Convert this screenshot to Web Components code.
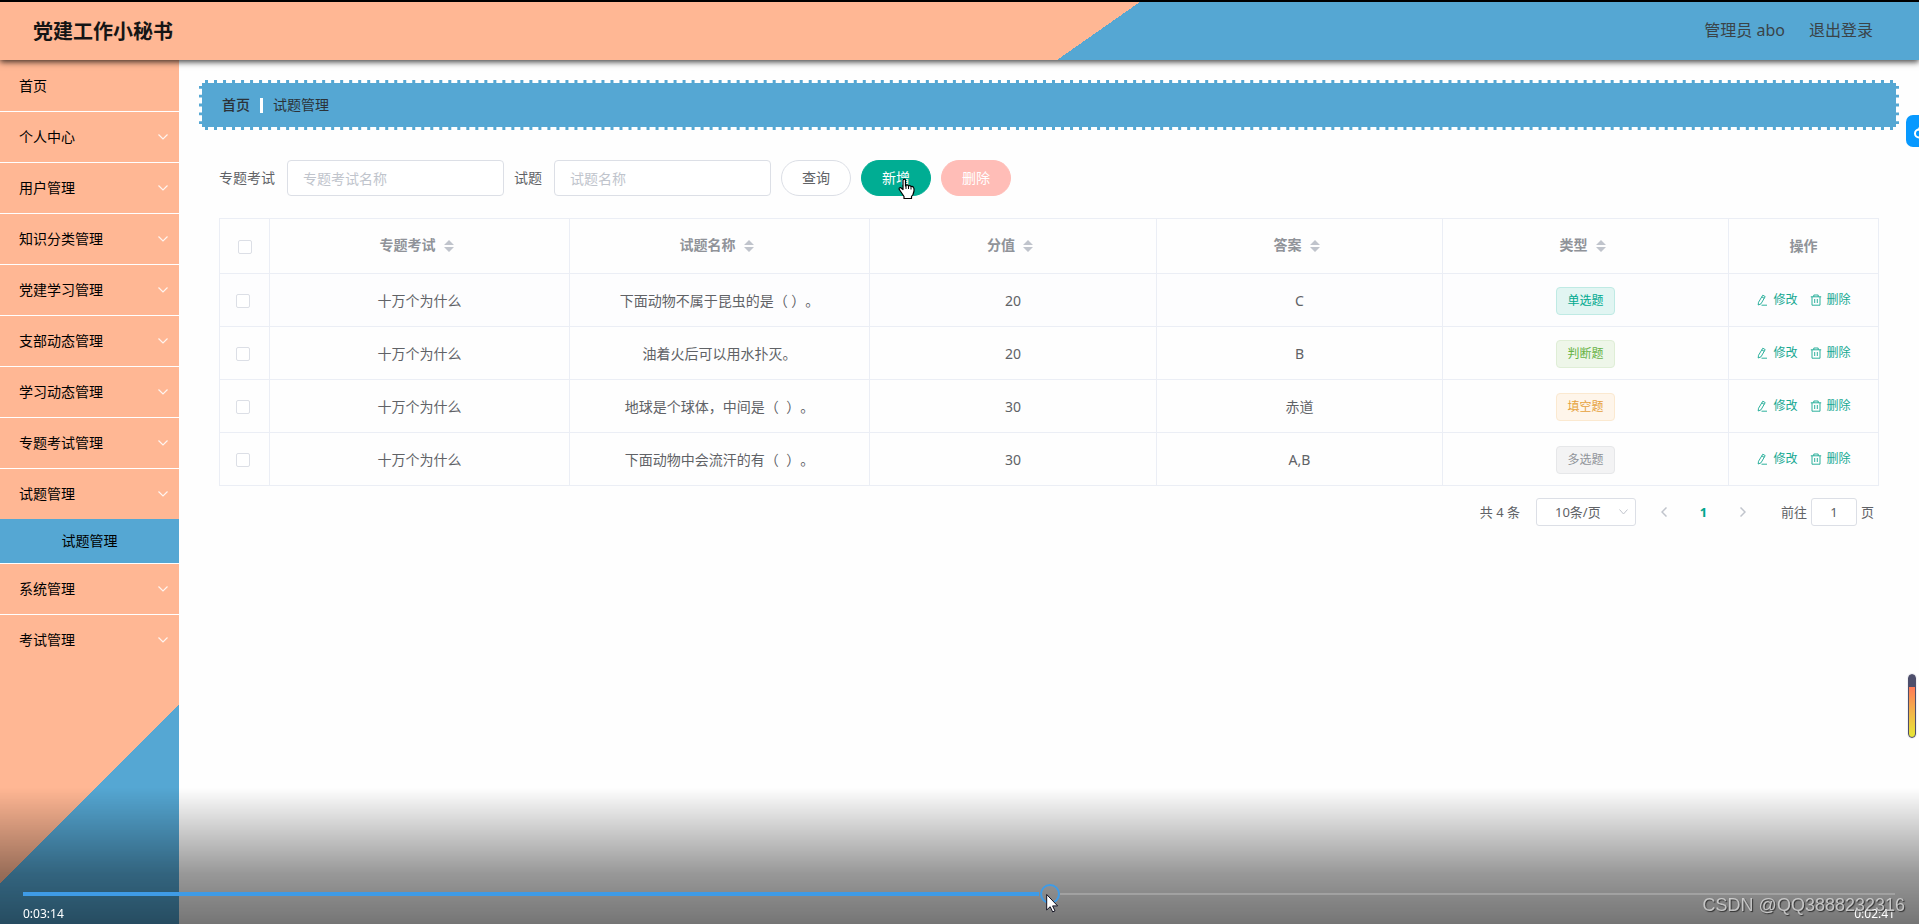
<!DOCTYPE html>
<html lang="zh-CN">
<head>
<meta charset="utf-8">
<title>党建工作小秘书</title>
<style>
  html, body { margin: 0; height: 100%; }
  body {
    font: 14px/20px "Noto Sans", "Noto Sans CJK SC", sans-serif;
    text-spacing-trim: space-all;
    color: #606266;
    --peach: #ffb794;
    --blue: #55a7d3;
    --teal: #00ad93;
    --line: #ebeef5;
    --field: #dcdfe6;
  }
</style>
</head>
<body>
<admin-app></admin-app>

<script>
const define = (name, html, setup) => {
  const tpl = document.createElement('template');
  tpl.innerHTML = `<style>*{box-sizing:border-box}a{color:inherit;text-decoration:none}input,select,button{font:inherit;color:inherit;margin:0}</style>` + html;
  customElements.define(name, class extends HTMLElement {
    constructor() {
      super();
      this.attachShadow({ mode: 'open' }).append(tpl.content.cloneNode(true));
    }
    connectedCallback() {
      if (setup && !this.ready) { this.ready = true; setup(this, this.shadowRoot); }
    }
  });
};

/* Header bar */
define('app-header', `
<style>
  :host { display: flex; align-items: center; justify-content: space-between; height: 60px; box-sizing: border-box;
    padding: 0 46px 0 33px; border-top: 2px solid #000; position: relative; z-index: 1;
    background: linear-gradient(145deg, var(--peach) 57%, var(--blue) 57%);
    background-origin: border-box; box-shadow: 0 2px 6px rgba(0,0,0,.75); }
  h1 { margin: 0; padding-top: 2px; font-size: 20px; line-height: 56px; font-weight: 700; color: #151515; }
  nav { display: flex; gap: 24px; font-size: 16px; line-height: 56px; color: #3a4348; padding-bottom: 2px; }
</style>
<h1><slot></slot></h1>
<nav><span>管理员 abo</span><a href="#logout">退出登录</a></nav>`);

/* One entry of the side menu */
define('menu-item', `
<style>
  :host { display: block; border-bottom: 1px solid #fff; }
  :host([last]), :host([open]) { border-bottom: 0; }
  a { display: flex; align-items: center; justify-content: space-between; height: 50px; padding: 0 11px 0 19px; color: #000; }
  :host([leaf]) svg { display: none; }
  :host([sub]) a { height: 44px; padding: 0; justify-content: center; background: var(--blue); }
  svg { width: 10px; height: 6px; }
</style>
<a href="#"><slot></slot><svg viewBox="0 0 10 6"><path d="M.5.5 5 5 9.500.5" fill="none" stroke="#fff" stroke-opacity=".85" stroke-width="1.200"/></svg></a>`);

define('side-menu', `
<style>
  :host { display: block; width: 179px; flex: none; padding-top: 1px; box-sizing: border-box;
    background: linear-gradient(135deg, var(--peach) 79%, var(--blue) 79%); }
</style>
<nav>
  <menu-item leaf>首页</menu-item>
  <menu-item>个人中心</menu-item>
  <menu-item>用户管理</menu-item>
  <menu-item>知识分类管理</menu-item>
  <menu-item>党建学习管理</menu-item>
  <menu-item>支部动态管理</menu-item>
  <menu-item>学习动态管理</menu-item>
  <menu-item>专题考试管理</menu-item>
  <menu-item open>试题管理</menu-item>
  <menu-item sub leaf>试题管理</menu-item>
  <menu-item>系统管理</menu-item>
  <menu-item last>考试管理</menu-item>
</nav>`);

define('bread-crumb', `
<style>
  :host { display: flex; align-items: center; gap: 9px; height: 50px; box-sizing: border-box; padding: 0 20px;
    background: var(--blue); border: 3px dashed #fff; color: #2b3238; }
  a { font-weight: 500; }
  i { width: 3px; height: 15px; background: #fff; margin: 0 1px; }
</style>
<a href="#home">首页</a><i></i><span>试题管理</span>`);

define('search-field', `
<style>
  :host { display: flex; align-items: center; }
  label { margin-right: 12px; }
  input { width: 217px; height: 36px; padding: 0 15px; border: 1px solid var(--field); border-radius: 4px; background: #fff; outline: 0; }
  input::placeholder { color: #c0c4cc; opacity: 1; }
</style>
<label for="f"></label><input id="f" type="text">`, (el, root) => {
  root.querySelector('label').textContent = el.getAttribute('label');
  root.querySelector('input').placeholder = el.getAttribute('hint');
});

define('pill-button', `
<style>
  :host { display: block; position: relative; }
  button { display: block; width: 70px; height: 36px; padding: 0; border: 1px solid var(--field); border-radius: 18px; background: #fff; cursor: pointer; }
  :host([kind=primary]) button { background: var(--teal); border-color: var(--teal); color: #fff; }
  :host([kind=danger]) button { background: #ffbdb7; border-color: #ffbdb7; color: #fff; }
</style>
<button type="button"><slot></slot></button><slot name="over"></slot>`);

define('hand-cursor', `
<style>
  :host { position: absolute; left: 37px; top: 18px; width: 17px; height: 22px; pointer-events: none; }
  svg { display: block; }
</style>
<svg width="17" height="22" viewBox="0 0 17 22"><path d="M5.500 1.500q1.500-1 2 .5V8l1-1q1.500-.5 2 1 1.500-1 2.500.5 1.500-.7 2.500.8.800 1 .5 3.700l-1 3.500-1.500 2v2H6v-2l-2-3-3-4.500q0-1.500 1.500-1.500l2.500 2V2z" fill="#fff" stroke="#000" stroke-width="1.200" stroke-linejoin="round"/><path d="M8 8v3M10.500 8v3M13 9v2.500" stroke="#000" fill="none"/></svg>`);

define('tick-box', `
<style>
  :host { display: inline-block; vertical-align: middle; line-height: 0; }
  input { appearance: none; width: 14px; height: 14px; border: 1px solid var(--field); border-radius: 2px; background: #fff; }
</style>
<input type="checkbox" aria-label="选择">`);

define('sort-arrows', `
<style>
  :host { display: inline-block; vertical-align: middle; margin-left: 8px; line-height: 0; }
</style>
<svg width="10" height="12" viewBox="0 0 10 12"><path d="M5 0 10 5H0zM5 12 10 7H0z" fill="#c0c4cc"/></svg>`);

define('type-tag', `
<style>
  :host { display: inline-block; vertical-align: middle; height: 28px; box-sizing: border-box; padding: 0 10px; border: 1px solid #bfeae4; border-radius: 4px;
    font-size: 12px; line-height: 26px; background: #e1f5f2; color: #00a98f; }
  :host([kind=judge]) { background: #eef6e9; border-color: #dfeed6; color: #67b345; }
  :host([kind=blank]) { background: #fef5ea; border-color: #fbe9d0; color: #e6a23c; }
  :host([kind=multi]) { background: #f3f3f4; border-color: #e6e7e9; color: #909399; }
</style><slot></slot>`);

define('row-actions', `
<style>
  :host { display: flex; justify-content: center; gap: 12px; font-size: 12px; line-height: 18px; color: #16a892; padding-bottom: 2px; }
  button { display: flex; align-items: center; gap: 5px; border: 0; background: none; padding: 0; cursor: pointer; }
  svg { fill: none; stroke: currentColor; width: 12px; height: 12px; }
</style>
<button type="button"><svg viewBox="0 0 12 12"><path d="M6.800 1.200 9.200 2.600 5 9.800 2.200 11 2.500 8.300zM5.800 2.900 8.200 4.300M5.500 11.200H11" stroke-width=".9"/></svg>修改</button>
<button type="button"><svg viewBox="0 0 12 12"><path d="M.8 2.800H11.200M3.800 2.800V1H8.200V2.800M2 2.800V11.200H10V2.800M4.700 5V9M7.300 5V9" stroke-width=".9"/></svg>删除</button>`);

define('question-table', `
<style>
  :host { display: block; }
  table { width: 100%; table-layout: fixed; border-collapse: separate; border-spacing: 0; border-top: 1px solid var(--line); border-left: 1px solid var(--line); }
  th, td { border-right: 1px solid var(--line); border-bottom: 1px solid var(--line); padding: 0; text-align: center; vertical-align: middle; }
  th { height: 55px; color: #909399; font-weight: 700; }
  th.sort { padding: 0 6px 2px 0; }
  td { height: 53px; padding-top: 2px; }
  td.pick { padding: 0 4px 0 0; }
  tbody tr:first-child { background: #fdfdfe; }
  .pick { width: 50px; } .wide { width: 300px; } .score { width: 287px; } .ops { width: 150px; }
</style>
<table>
  <thead><tr><th class="pick"><tick-box></tick-box></th>
    <th class="sort wide">专题考试<sort-arrows></sort-arrows></th><th class="sort wide">试题名称<sort-arrows></sort-arrows></th>
    <th class="sort score">分值<sort-arrows></sort-arrows></th><th class="sort">答案<sort-arrows></sort-arrows></th>
    <th class="sort">类型<sort-arrows></sort-arrows></th><th class="ops">操作</th></tr></thead>
  <tbody></tbody>
</table>`, (el, root) => {
  const rows = [
    ['下面动物不属于昆虫的是（ ）。', '20', 'C', 'single', '单选题'],
    ['油着火后可以用水扑灭。', '20', 'B', 'judge', '判断题'],
    ['地球是个球体，中间是（&nbsp; ）。', '30', '赤道', 'blank', '填空题'],
    ['下面动物中会流汗的有（&nbsp; ）。', '30', 'A,B', 'multi', '多选题']
  ];
  root.querySelector('tbody').innerHTML = rows.map(([q, score, answer, kind, type]) => `<tr>
    <td class="pick"><tick-box></tick-box></td><td>十万个为什么</td><td>${q}</td><td>${score}</td><td>${answer}</td>
    <td><type-tag kind="${kind}">${type}</type-tag></td><td><row-actions></row-actions></td></tr>`).join('');
});

define('page-nav', `
<style>
  :host { display: flex; align-items: center; justify-content: flex-end; height: 28px; padding-right: 5px; margin-top: 12px; font-size: 13px; }
  .size { position: relative; margin: 0 10px 0 16px; display: flex; align-items: center; }
  select { appearance: none; width: 100px; height: 28px; border: 1px solid var(--field); border-radius: 3px; background: #fff; padding: 0 0 0 18px; }
  .size svg { position: absolute; right: 8px; }
  svg { fill: none; stroke: #c0c4cc; }
  button { display: grid; place-items: center; width: 36px; height: 28px; border: 0; background: none; padding: 0; }
  .cur { width: 43px; color: #00a58c; font-weight: 700; }
  label { margin: 0 4px 0 20px; }
  input { width: 46px; height: 28px; border: 1px solid var(--field); border-radius: 3px; text-align: center; padding: 0; margin-right: 4px; }
</style>
<span>共 4 条</span>
<span class="size"><select aria-label="每页条数"><option>10条/页</option></select><svg width="9" height="6" viewBox="0 0 9 6"><path d="M.5.5 4.500 5 8.500.5"/></svg></span>
<button type="button" aria-label="上一页"><svg width="6" height="10" viewBox="0 0 6 10"><path d="M5.500.5 1 5l4.500 4.500" stroke-width="1.500"/></svg></button>
<button type="button" class="cur">1</button>
<button type="button" aria-label="下一页"><svg width="6" height="10" viewBox="0 0 6 10"><path d="M.5.5 5 5 .5 9.500" stroke-width="1.500"/></svg></button>
<label for="go">前往</label><input id="go" value="1"><span>页</span>`);

/* Controls of the recording that lie over the page */
define('player-bar', `
<style>
  :host { position: fixed; left: 0; right: 0; bottom: 0; height: 136px; z-index: 3; box-sizing: border-box; padding: 0 24px 0 23px;
    display: flex; flex-direction: column; justify-content: flex-end; color: #fff; font-size: 12px; line-height: 20px;
    background: linear-gradient(rgba(0,0,0,0), rgba(0,0,0,.4) 63%, rgba(0,0,0,.54)); }
  input { appearance: none; display: block; width: 100%; height: 20px; background: none; }
  input::-webkit-slider-runnable-track { height: 4px;
    background: linear-gradient(to right, #3f9be6 54.3%, transparent 54.3%),
      linear-gradient(to right, transparent 55.4%, rgba(255,255,255,.2) 55.4%) center / 100% 2px no-repeat; }
  input::-webkit-slider-thumb { appearance: none; box-sizing: border-box; width: 20px; height: 20px; margin-top: -8px; border: 2px solid #3f9be6; border-radius: 50%; background: none; }
  div { display: flex; justify-content: space-between; }
</style>
<input type="range" min="0" max="1000" value="549" aria-label="播放进度">
<div><span>0:03:14</span><span>0:02:41</span></div>`);

define('arrow-cursor', `
<style>:host { position: fixed; left: calc(54.600% - 2px); bottom: 11px; z-index: 5; pointer-events: none; line-height: 0; }</style>
<svg width="13" height="20" viewBox="0 0 13 20"><path d="M.7 1.500V17l3.500-3.300 2.500 5.200 2.300-1-2.400-5h5z" fill="#fff" stroke="#101020"/></svg>`);

define('water-mark', `
<style>:host { position: fixed; right: 14px; bottom: 8px; z-index: 4; font: 18px/22px "Liberation Sans", sans-serif; color: rgba(215,215,215,.85); text-shadow: 1px 1px 1px rgba(30,30,30,.8); }</style><slot></slot>`);

define('edge-tools', `
<style>
  .chat { position: fixed; right: 0; top: 115px; width: 13px; height: 32px; border-radius: 7px 0 0 7px; background: #0799ff; overflow: hidden; }
  .chat svg { display: block; }
  .gauge { position: fixed; right: 3px; top: 674px; width: 8px; height: 64px; border: 1px solid #4d4e6b; border-radius: 4px; box-shadow: 0 0 0 1px #f1f1f4;
    background: linear-gradient(#4d4e6b 12px, #ff7a58 12px, #f3b24a 36px, #e8e337 60px); }
</style>
<div class="chat"><svg width="13" height="32" viewBox="0 0 13 32"><circle cx="13" cy="18.500" r="4" fill="none" stroke="#fff" stroke-width="2"/><path d="M13 12.500v3" stroke="#fff" stroke-width="1.500"/></svg></div>
<div class="gauge"></div>`);

define('admin-app', `
<style>
  :host { display: flex; flex-direction: column; min-height: 100%; }
  .body { flex: 1; display: flex; }
  main { flex: 1; min-width: 0; padding: 20px; background: #fefefe; }
  .content { padding: 30px 20px 0; }
  form { display: flex; align-items: center; gap: 10px; margin-bottom: 22px; }
</style>
<app-header>党建工作小秘书</app-header>
<div class="body">
  <side-menu></side-menu>
  <main>
    <bread-crumb></bread-crumb>
    <div class="content">
      <form>
        <search-field label="专题考试" hint="专题考试名称"></search-field>
        <search-field label="试题" hint="试题名称"></search-field>
        <pill-button>查询</pill-button>
        <pill-button kind="primary">新增<hand-cursor slot="over"></hand-cursor></pill-button>
        <pill-button kind="danger">删除</pill-button>
      </form>
      <question-table></question-table>
      <page-nav></page-nav>
    </div>
  </main>
</div>
<edge-tools></edge-tools>
<player-bar></player-bar>
<water-mark>CSDN @QQ3888232316</water-mark>
<arrow-cursor></arrow-cursor>`);
</script>
</body>
</html>
